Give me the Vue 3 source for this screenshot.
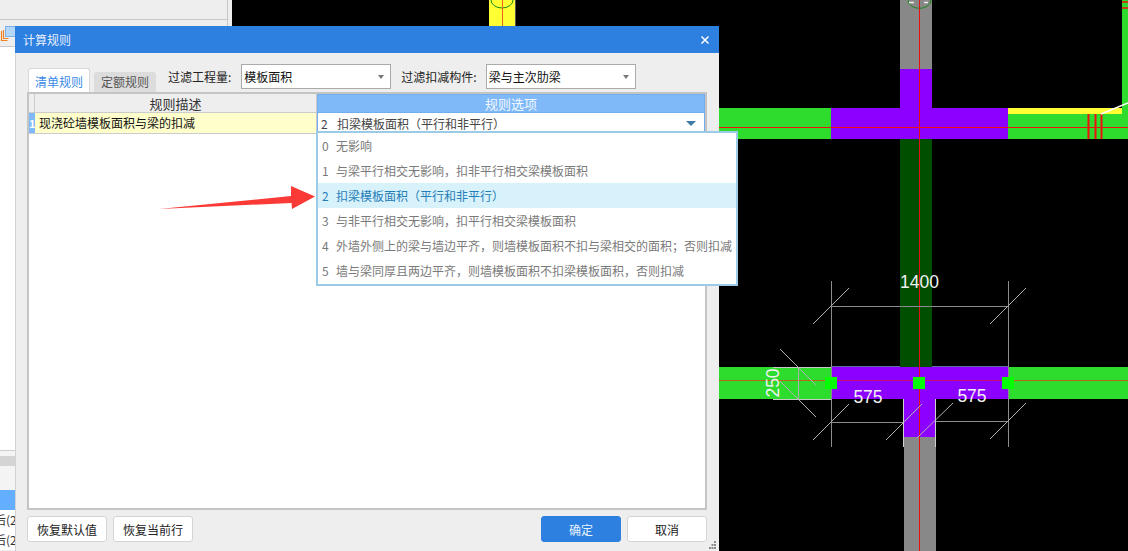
<template>
  <div class="page">
    <!-- 左侧面板（大部分被弹窗挡住） -->
    <aside class="side">
      <div class="side-bar"></div>
      <div class="side-tool">
        <svg class="side-icon" width="16" height="16" viewBox="0 0 16 16">
          <path d="M1.5 5v9.5h6M3.5 4v8.5h5" fill="none" stroke="#f08020" stroke-width="1.2" />
          <rect x="5.5" y="0.5" width="10" height="10" fill="#b4d6fa" stroke="#7fb0e4" />
        </svg>
      </div>
      <div class="side-list"></div>
      <div class="side-gap"></div>
      <div class="side-group"></div>
      <div class="side-gap2"></div>
      <div class="side-row active"></div>
      <div class="side-row">后(2</div>
      <div class="side-row">后(2</div>
    </aside>

    <!-- CAD 画布 -->
    <svg class="canvas" viewBox="232 0 896 551" width="896" height="551">
      <rect x="232" y="0" width="896" height="551" fill="#000" />
      <!-- 上方黄色柱 -->
      <rect x="489" y="0" width="26" height="26" fill="#ffff33" />
      <path d="M491 0a11 8 0 0 0 22 0" fill="none" stroke="#1a8a1a" stroke-width="1" />
      <line x1="502.500" y1="0" x2="502.500" y2="26" stroke="#e8641e" />
      <line x1="515.500" y1="0" x2="515.500" y2="26" stroke="#555" />

      <!-- 竖向墙 -->
      <rect x="900" y="0" width="32" height="69" fill="#888" />
      <rect x="900" y="139" width="32" height="228" fill="#004f00" />
      <rect x="904" y="437" width="32" height="114" fill="#888" />
      <path d="M908 0a11 8 0 0 0 23 0" fill="none" stroke="#1a8a1a" />
      <path d="M909 2.500h5M924 2.500h4" stroke="#eee" stroke-width="1.500" />

      <!-- 绿色梁 -->
      <rect x="719" y="108" width="112" height="31" fill="#2ddc2d" />
      <rect x="1008" y="108" width="120" height="31" fill="#2ddc2d" />
      <rect x="1122" y="0" width="6" height="114" fill="#2ddc2d" />
      <rect x="1008" y="108" width="114" height="6" fill="#ffff33" />
      <rect x="719" y="367" width="112" height="32" fill="#2ddc2d" />
      <rect x="1008" y="367" width="120" height="32" fill="#2ddc2d" />

      <!-- 紫色节点 -->
      <path d="M900 69h32v39h76v31H831v-31h69z" fill="#8b00ff" />
      <path d="M831 367h177v32h-72v38h-32v-38h-73z" fill="#8b00ff" />
      <path d="M831 366.500h69M932 366.500h76" stroke="#5a6ea0" />

      <!-- 红色轴线 -->
      <line x1="919.500" y1="0" x2="919.500" y2="551" stroke="#e61010" />
      <line x1="719" y1="127.500" x2="1128" y2="127.500" stroke="#f01010" />
      <line x1="719" y1="380.500" x2="831" y2="380.500" stroke="#b8641a" />
      <line x1="1008" y1="380.500" x2="1128" y2="380.500" stroke="#b8641a" />
      <line x1="831" y1="380.500" x2="1008" y2="380.500" stroke="#c8107a" />
      <path d="M1088.500 114v25M1095.500 114v25M1101.500 114v25" stroke="#f01010" stroke-width="2" />
      <path d="M1122 2h6M1122 8h6" stroke="#f01010" stroke-width="1.500" />
      <line x1="1101" y1="114" x2="1128" y2="103" stroke="#fff" stroke-width="1.500" />

      <!-- 标注线 -->
      <line
        v-for="(d, i) in dimLines"
        :key="i"
        :x1="d[0]"
        :y1="d[1]"
        :x2="d[2]"
        :y2="d[3]"
        :stroke="d[4] || '#8c8c8c'"
        stroke-width="1"
      />
      <rect v-for="x in gripXs" :key="x" :x="x" y="377" width="12" height="12" fill="#00ff00" />

      <text class="dim" x="919.500" y="288" text-anchor="middle">1400</text>
      <text class="dim" x="868" y="403" text-anchor="middle">575</text>
      <text class="dim" x="972" y="402" text-anchor="middle">575</text>
      <text class="dim" text-anchor="middle" transform="translate(779 383) rotate(-90)">250</text>
    </svg>

    <!-- 计算规则弹窗 -->
    <section class="dialog">
      <header class="title-bar">
        <span>计算规则</span>
        <svg class="close" width="10" height="10" viewBox="0 0 10 10">
          <path d="M1.500 1.500l7 7M8.500 1.500l-7 7" stroke="#fff" stroke-width="1.500" />
        </svg>
      </header>

      <div class="dialog-body">
        <div class="toolbar">
          <div class="tabs">
            <div class="tab active">清单规则</div>
            <div class="tab">定额规则</div>
          </div>
          <label class="filter-label first">过滤工程量:</label>
          <div class="select">
            <span>模板面积</span>
            <i class="select-arrow"></i>
          </div>
          <label class="filter-label">过滤扣减构件:</label>
          <div class="select">
            <span>梁与主次肋梁</span>
            <i class="select-arrow"></i>
          </div>
        </div>

        <div class="grid-box">
          <div class="grid">
            <div class="cell head corner"></div>
            <div class="cell head">规则描述</div>
            <div class="cell head selected">规则选项</div>
            <div class="cell row-no">1</div>
            <div class="cell desc">现浇砼墙模板面积与梁的扣减</div>
            <div class="cell option">
              <span class="num">2</span>
              <span>扣梁模板面积（平行和非平行）</span>
              <i class="option-arrow"></i>
            </div>
          </div>

          <ul class="menu">
            <li
              v-for="item in options"
              :key="item.id"
              class="menu-item"
              :class="{ current: item.id === 2 }"
            >
              <span class="num">{{ item.id }}</span>
              <span>{{ item.text }}</span>
            </li>
          </ul>
        </div>

        <div class="footer">
          <button class="btn">恢复默认值</button>
          <button class="btn">恢复当前行</button>
          <button class="btn primary">确定</button>
          <button class="btn">取消</button>
        </div>
      </div>

      <!-- 红色箭头批注 -->
      <svg class="arrow" width="160" height="30" viewBox="0 0 160 30">
        <path d="M1 26L133 13 133 3 157 13.500 134 26 133.500 20z" fill="#f93a36" />
      </svg>

      <svg class="grip" width="8" height="8" viewBox="0 0 8 8">
        <path d="M5 0h2v2H5zM2.500 3h2v2h-2zM5 3h2v2H5zM0 6h2v2H0zM2.500 6h2v2h-2zM5 6h2v2H5z" fill="#8a8a8a" />
      </svg>
    </section>
  </div>
</template>

<script setup>
const options = [
  { id: 0, text: "无影响" },
  { id: 1, text: "与梁平行相交无影响，扣非平行相交梁模板面积" },
  { id: 2, text: "扣梁模板面积（平行和非平行）" },
  { id: 3, text: "与非平行相交无影响，扣平行相交梁模板面积" },
  { id: 4, text: "外墙外侧上的梁与墙边平齐，则墙模板面积不扣与梁相交的面积；否则扣减" },
  { id: 5, text: "墙与梁同厚且两边平齐，则墙模板面积不扣梁模板面积，否则扣减" },
];

// 标注线：x1, y1, x2, y2, 颜色
const dimLines = [
  [831.5, 281, 831.5, 447],
  [1008.5, 281, 1008.5, 447],
  [831, 306.5, 1008, 306.5],
  [813, 324, 849, 288, "#b0b0b0"],
  [990, 324, 1026, 288, "#b0b0b0"],
  [831, 422.5, 904, 422.5],
  [936, 421.5, 1008, 421.5],
  [813, 440, 849, 404, "#b0b0b0"],
  [886, 440, 922, 404, "#b0b0b0"],
  [917, 438, 953, 403, "#b0b0b0"],
  [990, 439, 1026, 403, "#b0b0b0"],
  [773, 367.5, 831, 367.5, "#c8c8c8"],
  [773, 399.5, 831, 399.5, "#c8c8c8"],
  [798.5, 367, 798.5, 399, "#b0b0b0"],
  [780, 349, 816, 385, "#b0b0b0"],
  [780, 381, 816, 417, "#b0b0b0"],
  [903.5, 399, 903.5, 447, "#d0d0d0"],
  [935.5, 399, 935.5, 447, "#d0d0d0"],
];

const gripXs = [825, 913, 1002];
</script>

<style>
html,
body {
  margin: 0;
  overflow: hidden;
  background: #000;
}
</style>

<style scoped>
.page {
  position: relative;
  display: flex;
  width: 1128px;
  height: 551px;
  overflow: hidden;
  font-family: "Noto Sans CJK SC", "Liberation Sans", sans-serif;
  font-size: 12px;
  color: #222;
}

.side {
  display: flex;
  flex-direction: column;
  flex: none;
  width: 232px;
  height: 551px;
  box-sizing: border-box;
  background: #eee;
  border-right: 4px solid #eee;
}

.side-bar {
  height: 19px;
  border-right: 1px solid #c8c8c8;
  border-bottom: 1px solid #c8c8c8;
}

.side-tool {
  height: 27px;
  border-right: 1px solid #c8c8c8;
  border-bottom: 1px solid #c8c8c8;
  padding-top: 6px;
  box-sizing: border-box;
}

.side-icon {
  display: block;
}

.side-list {
  height: 403px;
  background: #fff;
}

.side-gap {
  height: 5px;
  border-top: 1px solid #ccc;
  background: #f4f4f4;
}

.side-group {
  height: 10px;
  background: #d4d4d4;
}

.side-gap2 {
  height: 24px;
  background: #f4f4f4;
}

.side-row {
  height: 20px;
  line-height: 20px;
  background: #fff;
  color: #333;
  text-indent: -6px;
  white-space: nowrap;
}

.side-row.active {
  background: #63aeff;
}

.canvas {
  display: block;
  flex: none;
}

.dim {
  font-family: "Liberation Sans", sans-serif;
  font-size: 17.5px;
  fill: #f2f2f2;
}

.dialog {
  position: absolute;
  left: 15px;
  top: 26px;
  display: flex;
  flex-direction: column;
  width: 704px;
  height: 525px;
  background: #eee;
}

.title-bar {
  display: flex;
  flex: none;
  align-items: center;
  justify-content: space-between;
  height: 27px;
  padding: 0 9px 0 8px;
  background: #2d7fe0;
  color: #e6f0fc;
}

.close {
  display: block;
}

.dialog-body {
  display: flex;
  flex: 1;
  flex-direction: column;
  padding: 11px 12px 0;
  border-left: 1px solid #cfd3d8;
  min-height: 0;
  box-sizing: border-box;
}

.toolbar {
  display: flex;
  flex: none;
  align-items: flex-start;
  height: 28px;
}

.tabs {
  display: flex;
  align-items: flex-end;
  gap: 4px;
  height: 28px;
  flex: none;
}

.tab {
  width: 62px;
  height: 20px;
  line-height: 20px;
  text-align: center;
  background: #dcdcdc;
  color: #555;
  border-radius: 3px 3px 0 0;
}

.tab.active {
  height: 24px;
  line-height: 26px;
  background: #fff;
  color: #3a8ae8;
  box-sizing: border-box;
  border: 1px solid #d8d8d8;
  border-bottom: 0;
}

.filter-label {
  flex: none;
  line-height: 25px;
  margin-left: 10px;
  margin-right: 9px;
  color: #222;
}

.filter-label.first {
  margin-left: 12px;
  margin-right: 10px;
}

.select {
  position: relative;
  flex: none;
  box-sizing: border-box;
  width: 150px;
  height: 25px;
  line-height: 23px;
  padding-left: 2px;
  background: #fff;
  border: 1px solid #aaa;
  color: #111;
}

.select-arrow {
  position: absolute;
  right: 6px;
  top: 10px;
  border-top: 4px solid #777;
  border-left: 3px solid transparent;
  border-right: 3px solid transparent;
}

.grid-box {
  position: relative;
  flex: none;
  box-sizing: border-box;
  width: 680px;
  height: 418px;
  margin-left: -1px;
  background: #fff;
  border: 2px solid #c4c4c4;
}

.grid {
  display: grid;
  grid-template-columns: 6px 282px 1fr;
  grid-template-rows: 19px 21px;
}

.cell {
  box-sizing: border-box;
  white-space: nowrap;
}

.head {
  font-size: 13px;
  line-height: 19px;
  text-align: center;
  background: #eee;
  color: #333;
  border-right: 1px solid #ccc;
  border-bottom: 1px solid #ccc;
}

.head.selected {
  background: #7fb9f8;
  color: #f4f9ff;
  line-height: 18px;
  border: 1px solid #72aeee;
}

.row-no {
  background: #7fb9f8;
  color: #fff;
  font-size: 11px;
  font-weight: 700;
  line-height: 20px;
  overflow: hidden;
  text-align: center;
  border-bottom: 1px solid #ccc;
}

.desc {
  padding-left: 4px;
  line-height: 20px;
  background: #ffffcc;
  color: #111;
  border-right: 1px solid #ccc;
  border-bottom: 1px solid #ccc;
}

.option {
  position: relative;
  display: flex;
  align-items: center;
  padding-left: 3px;
  color: #444;
  border-left: 1px solid #72aeee;
  border-right: 1px solid #72aeee;
}

.option .num {
  width: 16px;
  flex: none;
}

.option-arrow {
  position: absolute;
  right: 8px;
  top: 8px;
  border-top: 5px solid #3f7da8;
  border-left: 5px solid transparent;
  border-right: 5px solid transparent;
}

.menu {
  position: absolute;
  left: 287px;
  top: 37px;
  z-index: 2;
  box-sizing: border-box;
  width: 422px;
  margin: 0;
  padding: 0 0 1px;
  list-style: none;
  background: #fff;
  border: 2px solid #9ccbe8;
}

.menu-item {
  display: flex;
  align-items: center;
  height: 25px;
  padding-left: 4px;
  color: #7a7a7a;
  white-space: nowrap;
}

.menu-item .num {
  width: 14px;
  flex: none;
}

.menu-item.current {
  background: #d8f2fb;
  color: #1f7db8;
}

.footer {
  display: flex;
  flex: none;
  gap: 6px;
  padding-top: 6px;
  margin-left: -1px;
}

.btn {
  box-sizing: border-box;
  width: 80px;
  height: 26px;
  padding: 0;
  font: inherit;
  color: #222;
  background: #fff;
  border: 1px solid #d4d4d4;
  border-radius: 3px;
}

.btn.primary {
  margin-left: auto;
  color: #e8f2fd;
  background: #2d7fe0;
  border-color: #2d7fe0;
}

.arrow {
  position: absolute;
  left: 143px;
  top: 157px;
  z-index: 3;
}

.grip {
  position: absolute;
  right: 2px;
  bottom: 2px;
}
</style>
